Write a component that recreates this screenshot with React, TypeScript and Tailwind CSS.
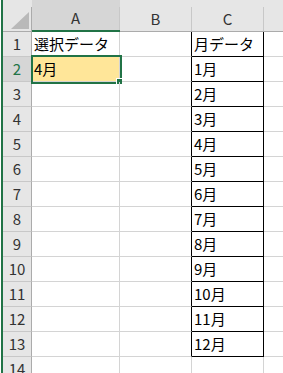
import React from 'react';

const gridFont = "font-['Noto_Sans_CJK_JP','Liberation_Sans',sans-serif]";

const rows = Array.from({ length: 14 }, (_, i) => i + 1);

function cellA(r: number) {
  if (r === 1) return '選択データ';
  if (r === 2) return '4月';
  return '';
}

function cellC(r: number) {
  if (r === 1) return '月データ';
  if (r >= 2 && r <= 13) return `${r - 1}月`;
  return '';
}

const HeaderCell: React.FC<{ label: string; width: string; selected?: boolean; last?: boolean }> = ({
  label,
  width,
  selected,
  last
}) => (
  <div
    className={`${width} h-[32px] flex flex-col ${
      selected ? 'bg-[#d6d6d6] border-b-2 border-b-[#217346]' : 'bg-[#e6e6e6] border-b border-b-[#ababab]'
    }`}
  >
    <div className="h-[7px]" />
    <div
      className={`flex-1 flex items-center justify-center text-[15px] text-[#333] ${
        last ? '' : 'border-r border-r-[#c8c8c8]'
      }`}
    >
      {label}
    </div>
  </div>
);

export default function App() {
  return (
    <div className={`w-[283px] h-[373px] overflow-hidden bg-white flex ${gridFont}`}>
      {/* window edge */}
      <div className="w-[1px] bg-white" />
      <div className="w-[2px] bg-[#217346]" />

      <div className="flex-1 flex flex-col">
        {/* column headers */}
        <div className="flex">
          <div className="w-[29px] h-[32px] bg-[#e6e6e6] border-b border-b-[#ababab] flex flex-col">
            <div className="h-[7px]" />
            <div className="flex-1 border-r border-r-[#ababab] flex items-end justify-end pr-[2px] pb-[2px]">
              <svg width="18" height="17" viewBox="0 0 18 17">
                <polygon points="18,0 18,17 0,17" fill="#b9b9b9" />
              </svg>
            </div>
          </div>
          <HeaderCell label="A" width="w-[88px]" selected />
          <HeaderCell label="B" width="w-[72px]" />
          <HeaderCell label="C" width="w-[72px]" />
          <HeaderCell label="" width="flex-1" last />
        </div>

        {/* rows */}
        {rows.map((r) => {
          const inTable = r <= 13;
          return (
            <div key={r} className="flex h-[25px] shrink-0">
              <div
                className={`w-[29px] border-r border-r-[#ababab] border-b border-b-[#c8c8c8] flex items-center justify-center text-[15px] ${
                  r === 2 ? 'bg-[#d6d6d6] text-[#217346]' : 'bg-[#e6e6e6] text-[#333]'
                }`}
              >
                {r}
              </div>

              <div
                className={`relative w-[88px] border-r border-r-[#d4d4d4] border-b border-b-[#d4d4d4] flex items-center pl-[2px] text-[15px] text-black whitespace-nowrap ${
                  r === 2 ? 'bg-[#ffe699]' : ''
                }`}
              >
                {cellA(r)}
                {r === 2 && (
                  <>
                    <div className="absolute -left-[1px] -top-[2px] w-[91px] h-[29px] border-2 border-[#217346]" />
                    <div className="absolute left-[84px] top-[21px] w-[6px] h-[6px] bg-[#217346] border-l border-t border-white" />
                  </>
                )}
              </div>

              <div
                className={`w-[72px] border-b border-b-[#d4d4d4] border-r ${
                  inTable ? 'border-r-black' : 'border-r-[#d4d4d4]'
                }`}
              />

              <div
                className={`w-[72px] border-r border-b flex items-center pl-[2px] text-[15px] text-black whitespace-nowrap ${
                  inTable ? 'border-r-black border-b-black' : 'border-r-[#d4d4d4] border-b-[#d4d4d4]'
                }`}
              >
                {cellC(r)}
              </div>

              <div className="flex-1 border-b border-b-[#d4d4d4]" />
            </div>
          );
        })}
      </div>
    </div>
  );
}
